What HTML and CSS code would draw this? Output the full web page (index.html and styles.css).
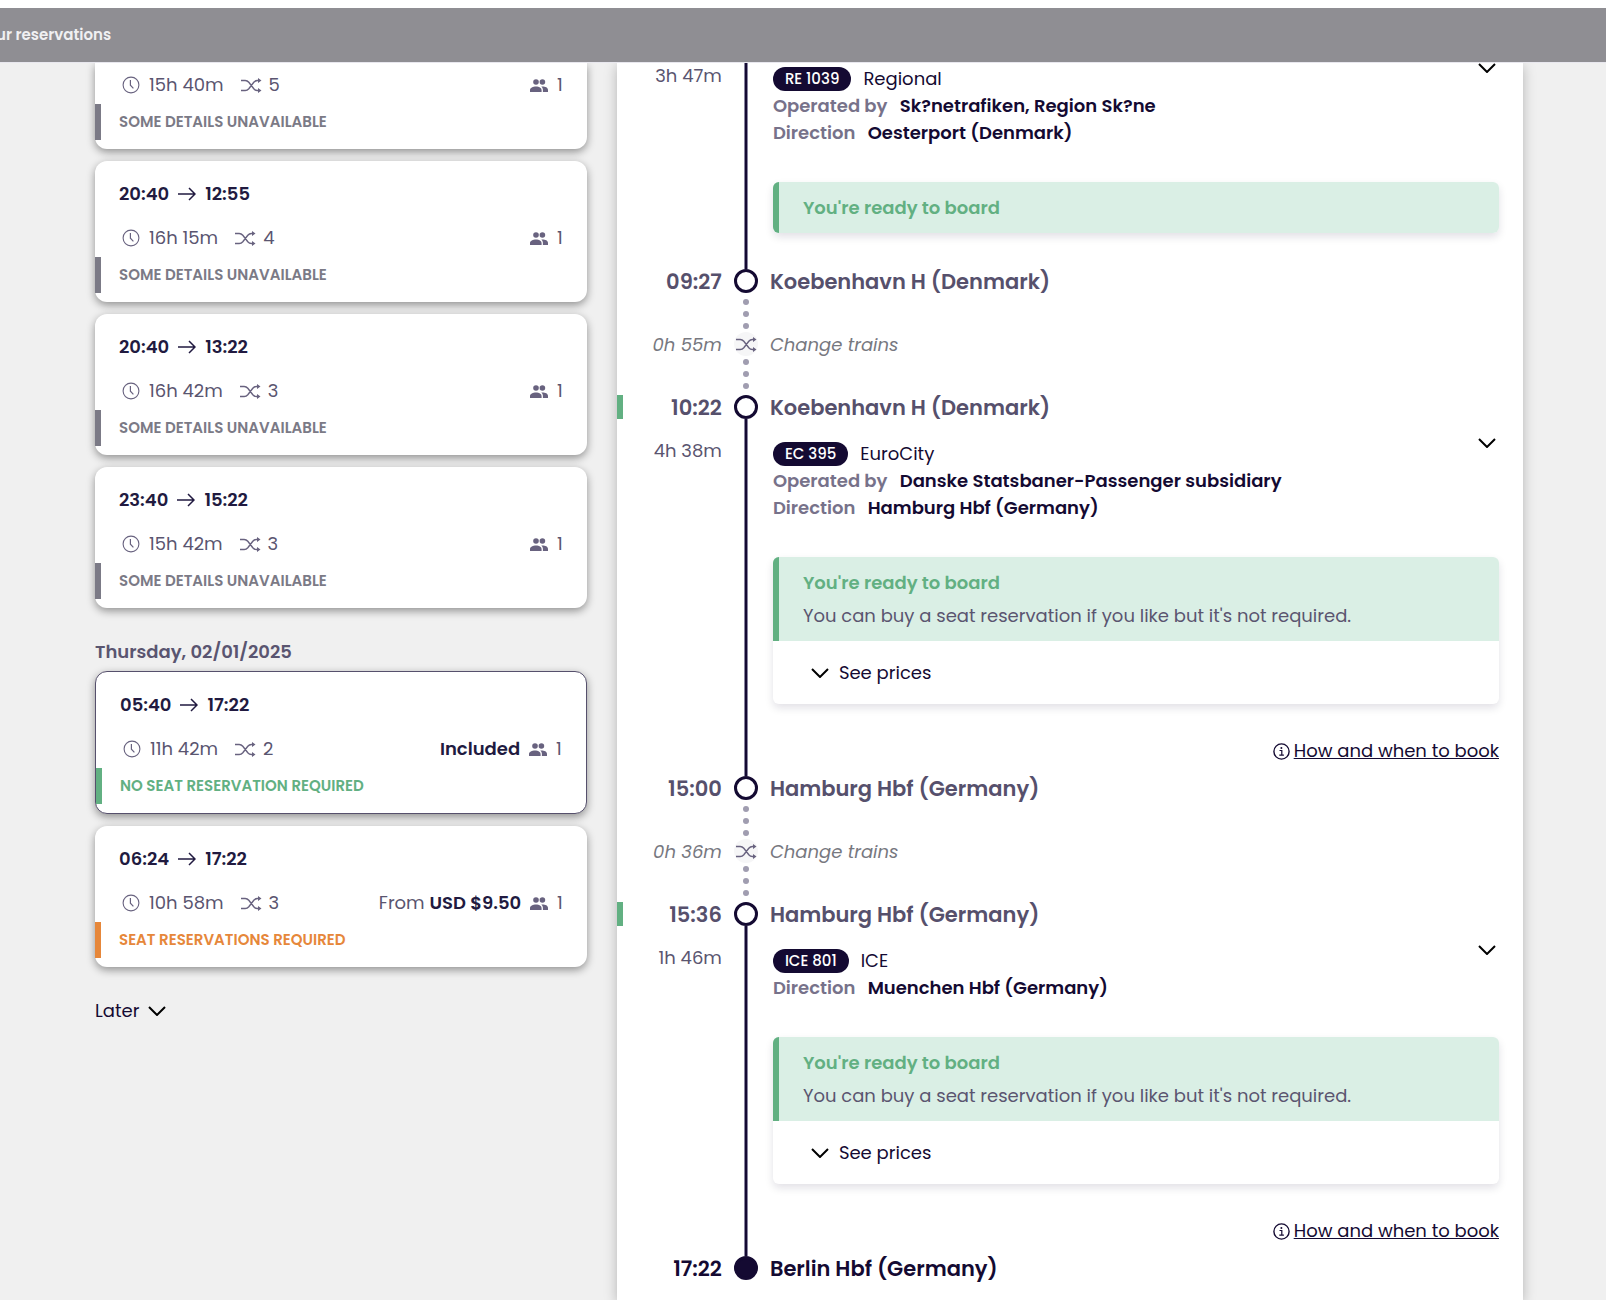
FILE: index.html
```html
<!DOCTYPE html>
<html lang="en">
<head>
    <meta charset="UTF-8">
    <meta name="viewport" content="width=device-width, initial-scale=1.0">
    <title>Your reservations</title>
    <link rel="stylesheet" href="styles.css">
</head>
<body>
    <!-- shared icons -->
    <svg class="sprite" aria-hidden="true">
        <symbol id="clock" viewBox="0 0 18 18">
            <circle cx="9" cy="9" r="7.9" fill="none" stroke="currentColor" stroke-width="1.1"/>
            <path d="M8.4 4v5.200l3 3.200" fill="none" stroke="currentColor" stroke-width="1.200"/>
        </symbol>
        <symbol id="shuffle" viewBox="0 0 22 16">
            <path d="M1 3.500h4.200c1.600 0 2.600.6 3.600 1.800l5 6.400c1 1.200 2 1.800 3.600 1.800h1.600M1 13.500h4.200c1.600 0 2.600-.6 3.600-1.800l5-6.400c1-1.200 2-1.800 3.600-1.800h1.600" fill="none" stroke="currentColor" stroke-width="1.400"/>
            <path d="M18 1l3.500 2.500L18 6zM18 11l3.500 2.500L18 16z" fill="currentColor"/>
        </symbol>
        <symbol id="people" viewBox="0 0 18 13">
            <circle cx="6" cy="3" r="2.800" fill="currentColor"/>
            <circle cx="12.400" cy="3" r="2.800" fill="currentColor"/>
            <path d="M0 13v-1.800C0 8.500 3 7.400 6 7.400s5.600 1.100 5.600 3.800V13zM12.900 13v-2c0-1.400-.6-2.500-1.600-3.400 3.300-.3 6.700.7 6.700 3.400v2z" fill="currentColor"/>
        </symbol>
        <symbol id="arrow" viewBox="0 0 18 14">
            <path d="M0 7h17M11 1l6 6-6 6" fill="none" stroke="currentColor" stroke-width="1.500"/>
        </symbol>
        <symbol id="chevron" viewBox="0 0 18 10">
            <path d="M1 1l8 8 8-8" fill="none" stroke="currentColor" stroke-width="2"/>
        </symbol>
        <symbol id="info" viewBox="0 0 17 17">
            <circle cx="8.500" cy="8.500" r="7.600" fill="none" stroke="currentColor" stroke-width="1.400"/>
            <circle cx="8.400" cy="4.900" r="1" fill="currentColor"/>
            <path d="M6.500 7.500h2.300v4.600M6.300 12.200h4.600" fill="none" stroke="currentColor" stroke-width="1.200"/>
        </symbol>
    </svg>

    <header class="topbar">
        <a class="topbar-link" href="#">ur reservations</a>
    </header>

    <main class="layout">
        <section class="results">
            <button type="button" class="card card-first">
                <span class="card-info">
                    <svg class="icon-clock"><use href="#clock"/></svg>
                    <span class="duration">15h 40m</span>
                    <svg class="icon-shuffle"><use href="#shuffle"/></svg>
                    <span>5</span>
                    <span class="price"><svg class="icon-people"><use href="#people"/></svg>1</span>
                </span>
                <span class="status">Some details unavailable</span>
            </button>

            <button type="button" class="card">
                <span class="card-times">20:40 <svg class="icon-arrow"><use href="#arrow"/></svg> 12:55</span>
                <span class="card-info">
                    <svg class="icon-clock"><use href="#clock"/></svg>
                    <span class="duration">16h 15m</span>
                    <svg class="icon-shuffle"><use href="#shuffle"/></svg>
                    <span>4</span>
                    <span class="price"><svg class="icon-people"><use href="#people"/></svg>1</span>
                </span>
                <span class="status">Some details unavailable</span>
            </button>

            <button type="button" class="card">
                <span class="card-times">20:40 <svg class="icon-arrow"><use href="#arrow"/></svg> 13:22</span>
                <span class="card-info">
                    <svg class="icon-clock"><use href="#clock"/></svg>
                    <span class="duration">16h 42m</span>
                    <svg class="icon-shuffle"><use href="#shuffle"/></svg>
                    <span>3</span>
                    <span class="price"><svg class="icon-people"><use href="#people"/></svg>1</span>
                </span>
                <span class="status">Some details unavailable</span>
            </button>

            <button type="button" class="card">
                <span class="card-times">23:40 <svg class="icon-arrow"><use href="#arrow"/></svg> 15:22</span>
                <span class="card-info">
                    <svg class="icon-clock"><use href="#clock"/></svg>
                    <span class="duration">15h 42m</span>
                    <svg class="icon-shuffle"><use href="#shuffle"/></svg>
                    <span>3</span>
                    <span class="price"><svg class="icon-people"><use href="#people"/></svg>1</span>
                </span>
                <span class="status">Some details unavailable</span>
            </button>

            <h2 class="date">Thursday, 02/01/2025</h2>

            <button type="button" class="card selected">
                <span class="card-times">05:40 <svg class="icon-arrow"><use href="#arrow"/></svg> 17:22</span>
                <span class="card-info">
                    <svg class="icon-clock"><use href="#clock"/></svg>
                    <span class="duration">11h 42m</span>
                    <svg class="icon-shuffle"><use href="#shuffle"/></svg>
                    <span>2</span>
                    <span class="price"><strong>Included</strong><svg class="icon-people"><use href="#people"/></svg>1</span>
                </span>
                <span class="status status-ok">No seat reservation required</span>
            </button>

            <button type="button" class="card">
                <span class="card-times">06:24 <svg class="icon-arrow"><use href="#arrow"/></svg> 17:22</span>
                <span class="card-info">
                    <svg class="icon-clock"><use href="#clock"/></svg>
                    <span class="duration">10h 58m</span>
                    <svg class="icon-shuffle"><use href="#shuffle"/></svg>
                    <span>3</span>
                    <span class="price"><span>From <strong>USD $9.50</strong></span><svg class="icon-people"><use href="#people"/></svg>1</span>
                </span>
                <span class="status status-required">Seat reservations required</span>
            </button>

            <button type="button" class="later">Later <svg class="icon-chevron"><use href="#chevron"/></svg></button>
        </section>

        <section class="journey">
            <div class="row leg leg-first">
                <div class="leg-duration">3h 47m</div>
                <div class="line"></div>
                <div class="leg-body">
                    <button type="button" class="toggle" aria-label="Show stops"><svg class="icon-chevron"><use href="#chevron"/></svg></button>
                    <div class="train"><span class="pill">RE 1039</span> Regional</div>
                    <div class="fact"><span class="fact-name">Operated by</span> Sk?netrafiken, Region Sk?ne</div>
                    <div class="fact"><span class="fact-name">Direction</span> Oesterport (Denmark)</div>
                    <div class="board">
                        <div class="board-head"><h3>You're ready to board</h3></div>
                    </div>
                </div>
            </div>

            <div class="row stop">
                <div class="stop-time">09:27</div>
                <div class="circle"></div>
                <div class="stop-name">Koebenhavn H (Denmark)</div>
            </div>

            <div class="row change">
                <div class="change-time">0h 55m</div>
                <div class="dots">
                    <i></i><i></i><i></i>
                    <span class="change-icon"><svg class="icon-shuffle"><use href="#shuffle"/></svg></span>
                    <i></i><i></i><i></i>
                </div>
                <div>Change trains</div>
            </div>

            <div class="row stop departure">
                <div class="stop-time">10:22</div>
                <div class="circle"></div>
                <div class="stop-name">Koebenhavn H (Denmark)</div>
            </div>

            <div class="row leg">
                <div class="leg-duration">4h 38m</div>
                <div class="line"></div>
                <div class="leg-body">
                    <button type="button" class="toggle" aria-label="Show stops"><svg class="icon-chevron"><use href="#chevron"/></svg></button>
                    <div class="train"><span class="pill">EC 395</span> EuroCity</div>
                    <div class="fact"><span class="fact-name">Operated by</span> Danske Statsbaner-Passenger subsidiary</div>
                    <div class="fact"><span class="fact-name">Direction</span> Hamburg Hbf (Germany)</div>
                    <div class="board">
                        <div class="board-head">
                            <h3>You're ready to board</h3>
                            <p>You can buy a seat reservation if you like but it's not required.</p>
                        </div>
                        <button type="button" class="prices"><svg class="icon-chevron"><use href="#chevron"/></svg>See prices</button>
                    </div>
                    <div class="book"><svg class="icon-info"><use href="#info"/></svg><a href="#">How and when to book</a></div>
                </div>
            </div>

            <div class="row stop">
                <div class="stop-time">15:00</div>
                <div class="circle"></div>
                <div class="stop-name">Hamburg Hbf (Germany)</div>
            </div>

            <div class="row change">
                <div class="change-time">0h 36m</div>
                <div class="dots">
                    <i></i><i></i><i></i>
                    <span class="change-icon"><svg class="icon-shuffle"><use href="#shuffle"/></svg></span>
                    <i></i><i></i><i></i>
                </div>
                <div>Change trains</div>
            </div>

            <div class="row stop departure">
                <div class="stop-time">15:36</div>
                <div class="circle"></div>
                <div class="stop-name">Hamburg Hbf (Germany)</div>
            </div>

            <div class="row leg">
                <div class="leg-duration">1h 46m</div>
                <div class="line"></div>
                <div class="leg-body">
                    <button type="button" class="toggle" aria-label="Show stops"><svg class="icon-chevron"><use href="#chevron"/></svg></button>
                    <div class="train"><span class="pill">ICE 801</span> ICE</div>
                    <div class="fact"><span class="fact-name">Direction</span> Muenchen Hbf (Germany)</div>
                    <div class="board">
                        <div class="board-head">
                            <h3>You're ready to board</h3>
                            <p>You can buy a seat reservation if you like but it's not required.</p>
                        </div>
                        <button type="button" class="prices"><svg class="icon-chevron"><use href="#chevron"/></svg>See prices</button>
                    </div>
                    <div class="book"><svg class="icon-info"><use href="#info"/></svg><a href="#">How and when to book</a></div>
                </div>
            </div>

            <div class="row stop final">
                <div class="stop-time">17:22</div>
                <div class="circle"></div>
                <div class="stop-name">Berlin Hbf (Germany)</div>
            </div>
        </section>
    </main>
</body>
</html>
```

FILE: styles.css
```css
* {
    box-sizing: border-box;
}
body {
    font-family: Poppins, Inter, sans-serif;
    font-size: 18px;
    line-height: 27px;
    margin: 0;
    min-height: 100vh;
    display: flex;
    flex-direction: column;
    background-color: #f0f0f0;
    color: #140a32;
}
h2, h3, p {
    margin: 0;
}
button {
    font: inherit;
    color: inherit;
    border: none;
    background: none;
    padding: 0;
    text-align: left;
    cursor: pointer;
}
svg {
    flex-shrink: 0;
    display: block;
}
.sprite {
    position: absolute;
    width: 0;
    height: 0;
}
.icon-clock {
    width: 18px;
    height: 18px;
}
.icon-shuffle {
    width: 22px;
    height: 16px;
}
.icon-people {
    width: 18px;
    height: 13px;
}
.icon-arrow {
    width: 18px;
    height: 14px;
}
.icon-chevron {
    width: 18px;
    height: 10px;
    color: #000;
}
.icon-info {
    width: 17px;
    height: 17px;
}
.icon-clock,
.icon-shuffle,
.icon-people {
    color: #68627f;
}

/* top bar */
.topbar {
    position: relative;
    z-index: 1;
    border-top: 8px solid #fff;
    border-bottom: 1px solid #e8e7ee;
    background-color: #8f8e93;
    height: 63px;
    display: flex;
    align-items: center;
}
.topbar-link {
    margin-left: -4px;
    color: #f0f0f2;
    font-size: 15px;
    line-height: 26px;
    font-weight: 600;
    text-decoration: none;
}

.layout {
    flex: 1;
    display: grid;
    grid-template-columns: minmax(0, 19fr) minmax(0, 35fr);
    column-gap: 30px;
    padding: 0 83px 0 95px;
}

/* results list */
.results {
    display: flex;
    flex-direction: column;
}
.card {
    display: flex;
    flex-direction: column;
    width: 100%;
    margin-bottom: 12px;
    padding: 17px 0 9px;
    border-radius: 12px;
    background-color: #fff;
    box-shadow: 0 3px 8px rgba(0, 0, 0, 0.4);
    line-height: 26px;
    color: #5a5570;
}
.card-first {
    padding-top: 6px;
    border-radius: 0 0 12px 12px;
}
.card-times {
    display: flex;
    align-items: center;
    gap: 9px;
    height: 32px;
    padding: 0 24px;
    margin-bottom: 12px;
    font-weight: 600;
    color: #211a40;
}
.card-info {
    display: flex;
    align-items: center;
    height: 32px;
    padding: 0 24px 0 27px;
    margin-bottom: 3px;
}
.card-info .icon-clock {
    margin-right: 9px;
}
.card-info .icon-shuffle {
    margin-right: 7px;
}
.duration {
    margin-right: 16px;
}
.price {
    display: flex;
    align-items: center;
    gap: 9px;
    margin-left: auto;
}
.price strong {
    font-weight: 600;
    color: #211a40;
}
.status {
    padding: 0 18px;
    border-left: 6px solid #7b7a86;
    line-height: 36px;
    font-size: 15px;
    font-weight: 600;
    text-transform: uppercase;
    color: #7b7a86;
}
.status-ok {
    border-color: #62b082;
    color: #62b082;
}
.status-required {
    border-color: #e6873a;
    color: #e6873a;
}
.selected {
    border: 1px solid #56506c;
}
.date {
    margin: 18px 0 6px;
    font-size: 18px;
    font-weight: 600;
    color: #5a5570;
}
.later {
    display: flex;
    align-items: center;
    gap: 9px;
    margin-top: 18px;
}

/* journey details */
.journey {
    background-color: #fff;
    box-shadow: 0 3px 12px rgba(0, 0, 0, 0.25);
}
.row {
    display: grid;
    grid-template-columns: 105px 24px minmax(0, 1fr);
    column-gap: 12px;
    padding-right: 24px;
}
.stop {
    align-items: center;
    font-size: 21px;
    line-height: 23px;
    font-weight: 600;
    color: #56506c;
}
.stop-time,
.leg-duration,
.change-time {
    text-align: right;
}
.departure {
    box-shadow: inset 6px 0 #62b082;
}
.circle {
    width: 24px;
    height: 24px;
    border: 3px solid #140a32;
    border-radius: 50%;
}
.final {
    color: #140a32;
    margin-bottom: 20px;
}
.final .circle {
    background-color: #140a32;
}
.line {
    justify-self: center;
    width: 4px;
    border: solid #8984a0;
    border-width: 0 1px;
    background-color: #140a32;
}
.leg-duration {
    padding-top: 18px;
    color: #5a5570;
}
.leg-body {
    padding: 19px 0 36px 3px;
}
.leg-first .leg-duration,
.leg-first .leg-body {
    padding-top: 0;
}
.leg-first .leg-duration {
    line-height: 26px;
}
.train {
    display: flex;
    align-items: center;
    gap: 12px;
    padding-top: 3px;
    line-height: 26px;
}
.pill {
    padding: 0 12px;
    border-radius: 12px;
    background-color: #140a32;
    color: #fff;
    font-size: 15px;
    font-weight: 500;
    line-height: 24px;
}
.toggle {
    float: right;
    padding: 0 3px;
}
.fact {
    font-weight: 600;
}
.fact-name {
    margin-right: 8px;
    color: #77728a;
}
.board {
    margin-top: 36px;
    border-radius: 6px;
    overflow: hidden;
    box-shadow: 0 4px 9px rgba(20, 10, 50, 0.12);
}
.board-head {
    padding: 12px 24px;
    border-left: 6px solid #62b082;
    background-color: #daefe5;
    color: #5a5570;
}
.board-head h3 {
    font-size: 18px;
    font-weight: 600;
    color: #62b082;
}
.board-head p {
    margin-top: 6px;
}
.prices {
    display: flex;
    align-items: center;
    gap: 10px;
    width: 100%;
    height: 63px;
    padding: 0 38px;
}
.book {
    display: flex;
    align-items: center;
    justify-content: flex-end;
    gap: 4px;
    height: 24px;
    margin: 35px 0 -23px;
    line-height: 26px;
}
.book a {
    color: inherit;
}
.change {
    align-items: center;
    font-style: italic;
    color: #77787f;
}
.dots {
    display: flex;
    flex-direction: column;
    align-items: center;
    gap: 6px;
    padding: 6px 0;
}
.dots i {
    width: 6px;
    height: 6px;
    border-radius: 50%;
    background-color: #a09db0;
}
.change-icon {
    display: flex;
    align-items: center;
    justify-content: center;
    width: 24px;
    height: 24px;
    margin: -3px 0;
    border-radius: 50%;
    background-color: #f6f6f7;
}
```
